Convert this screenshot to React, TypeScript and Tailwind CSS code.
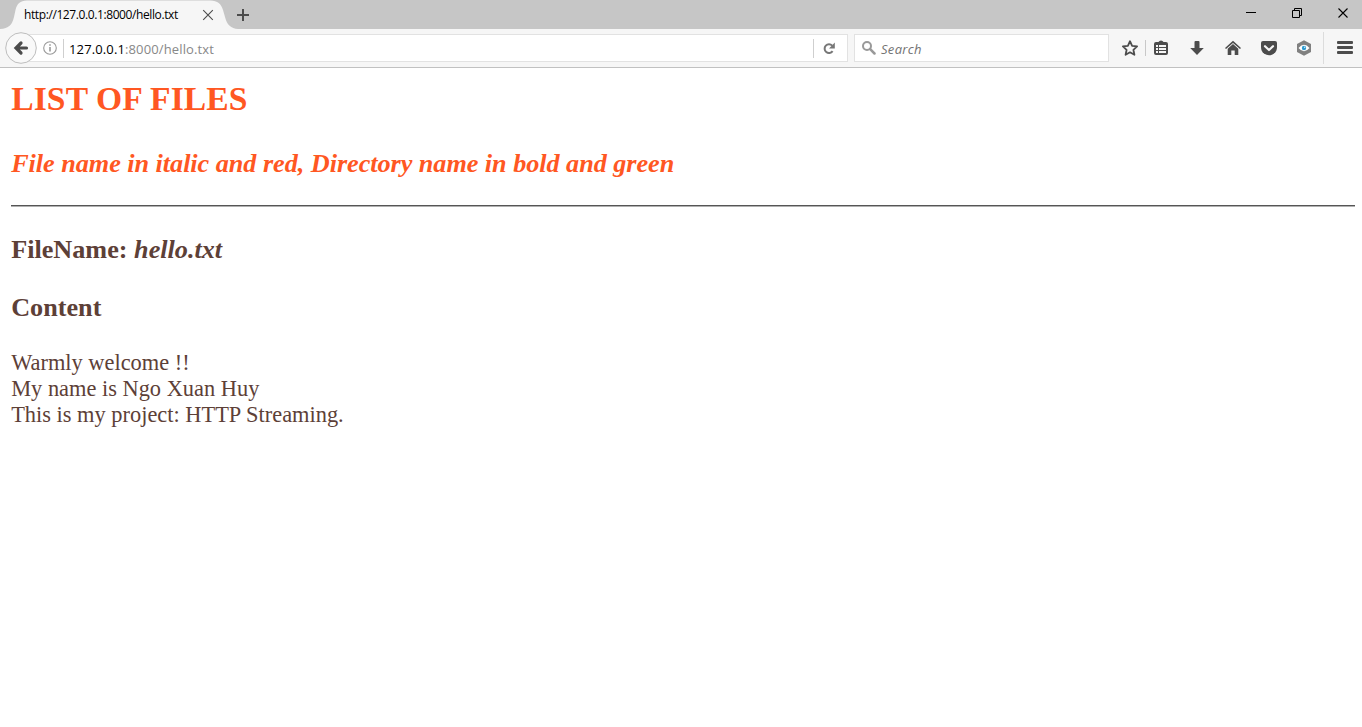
function TabStrip() {
  return (
    <div className="relative flex h-[29px] bg-[#c6c6c6]">
      <svg className="absolute left-0 top-0" width="240" height="29" viewBox="0 0 240 29">
        <path
          d="M0 29 C9 28.5 12 25 14 17 L15.500 10 C17 4 20 .5 27 .5 H210 C218 .5 221 4 223 10 L225 17 C227 25 231 28.500 238 29 Z"
          fill="#f6f6f6"
        />
      </svg>
      <div className="relative flex h-[29px] w-[226px] items-center pl-6">
        <span className="w-[177px] whitespace-nowrap pt-px text-[12px] leading-[16px] tracking-[-0.4px] text-black">
          http://127.0.0.1:8000/hello.txt
        </span>
        <svg className="ml-px" width="12" height="12" viewBox="0 0 12 12" stroke="#4c4c4c" strokeWidth="1.1">
          <path d="M1.200 1.200 10.800 10.800M10.800 1.200 1.200 10.800" />
        </svg>
      </div>
      <div className="relative flex h-[29px] flex-1 items-center pl-[10px]">
        <svg width="14" height="14" viewBox="0 0 14 14" fill="#4c4c4c">
          <path d="M6 1h2v5h5v2H8v5H6V8H1V6h5z" />
        </svg>
      </div>
      <div className="relative flex h-[26px] items-center">
        <svg width="116" height="26" viewBox="0 0 116 26" fill="none" stroke="#000">
          <path d="M0 12.500h10" />
          <path d="M46.500 10.500h7v7h-7z" />
          <path d="M48.500 10.500v-2h7v7h-2" />
          <path d="M92.500 8.500 101.500 17.500M101.500 8.500 92.500 17.500" strokeWidth="1.1" />
        </svg>
      </div>
    </div>
  );
}

function BackButton() {
  return (
    <svg className="relative ml-[5px] shrink-0" width="32" height="32" viewBox="0 0 32 32">
      <circle cx="16" cy="16" r="15.300" fill="#f9f9f9" stroke="#bdbdbd" />
      <path
        d="M16 11 11 16l5 5M11.500 16H21.500"
        fill="none"
        stroke="#4c4c4c"
        strokeWidth="3.200"
        strokeLinecap="round"
      />
    </svg>
  );
}

function ToolbarIcons() {
  return (
    <svg className="shrink-0" width="253" height="38" viewBox="1109 29 253 38" fill="#4c4c4c">
      <path
        d="m1130 41.200 2.100 4.600 5 .6-3.700 3.400 1 5-4.400-2.500-4.400 2.500 1-5-3.700-3.400 5-.6z"
        fill="none"
        stroke="#4c4c4c"
        strokeWidth="1.800"
        strokeLinejoin="round"
      />
      <path d="M1145 40h1v16h-1z" fill="#c8c8c8" />
      <path
        fillRule="evenodd"
        d="M1156 42h2.500l1-1q1.500-1 3 0l1 1h2.500q2 0 2 2v9q0 2-2 2h-10q-2 0-2-2v-9q0-2 2-2zM1156 45v2h2v-2zM1159 45v2h7v-2zM1156 48v2h2v-2zM1159 48v2h7v-2zM1156 51v2h2v-2zM1159 51v2h7v-2z"
      />
      <path d="M1195.500 41h3q1 0 1 1v6h4.300l-6.800 7-6.800-7h4.300v-6q0-1 1-1z" />
      <path d="m1233 40.800 8 7.200-1 1.100-7-6.200-7 6.200-1-1.100z" />
      <path d="m1233 44 5.300 4.700V55h-3.600v-4.500h-3.400V55h-3.600v-6.300z" />
      <path d="M1263 41h12q2 0 2 2v4q0 4-3 6.500-2.500 1.800-5 1.800t-5-1.800q-3-2.500-3-6.500v-4q0-2 2-2z" />
      <path
        d="m1265 46.200 4 3.800 4-3.800"
        fill="none"
        stroke="#f6f6f6"
        strokeWidth="2.200"
        strokeLinecap="round"
        strokeLinejoin="round"
      />
      <path d="m1304 40.200 7 3.800v8l-7 3.800-7-3.800v-8z" fill="#808080" />
      <path d="M1298.500 48q5.500-6.500 11 0-5.500 6.500-11 0z" fill="#fff" />
      <circle cx="1304" cy="48" r="2.200" fill="#2f9bd0" />
      <circle cx="1304.700" cy="47.300" r=".7" fill="#d8effa" />
      <path d="M1323 32h1v32h-1z" fill="#dcdcdc" />
      <rect x="1337" y="41" width="16" height="3" rx="1" />
      <rect x="1337" y="46" width="16" height="3" rx="1" />
      <rect x="1337" y="51" width="16" height="3" rx="1" />
    </svg>
  );
}

function Toolbar() {
  return (
    <div className="flex h-[39px] items-center border-b border-[#c1c1c1] bg-[#f6f6f6]">
      <BackButton />
      <div className="-ml-4 flex h-7 w-[827px] items-center border border-[#e2e2e2] bg-white pl-[21px]">
        <svg width="14" height="14" viewBox="0 0 14 14" fill="none" stroke="#999">
          <circle cx="7" cy="7" r="6.300" strokeWidth="1.100" />
          <path d="M7 6v4.500M7 3.300v1.500" strokeWidth="1.600" />
        </svg>
        <div className="ml-[6px] h-[19px] w-px bg-[#cfcfcf]" />
        <div className="ml-[5px] flex-1 whitespace-nowrap pt-[2px] text-[13px] leading-[18px] tracking-[0.13px] text-[#888]">
          <span className="text-black">127.0.0.1</span>:8000/hello.txt
        </div>
        <div className="h-[19px] w-px bg-[#cfcfcf]" />
        <svg className="ml-[9px] mr-[11px]" width="13" height="13" viewBox="0 0 13 13">
          <path d="M9.600 9.200A4.400 4.400 0 1 1 9.200 3.600" fill="none" stroke="#777" strokeWidth="2" />
          <path d="M11.800 .5v6H6z" fill="#777" />
        </svg>
      </div>
      <div className="ml-[6px] flex h-7 w-[255px] items-center border border-[#e2e2e2] bg-white pl-[7px]">
        <svg width="14" height="14" viewBox="0 0 14 14" fill="none" stroke="#999">
          <circle cx="5" cy="5" r="4" strokeWidth="2" />
          <path d="m8.200 8.200 4.300 4.300" strokeWidth="2.500" strokeLinecap="round" />
        </svg>
        <span className="ml-[5px] pt-[2px] text-[13px] italic leading-[18px] tracking-[0.3px] text-[#737373]">
          Search
        </span>
      </div>
      <ToolbarIcons />
    </div>
  );
}

export default function App() {
  return (
    <div className="flex h-[727px] w-[1362px] flex-col overflow-hidden bg-white">
      <header className="font-['Open_Sans','Noto_Sans',sans-serif]">
        <TabStrip />
        <Toolbar />
      </header>
      <main className="flex-1 pl-[11.2px] pr-[7.5px] pt-3 font-['Liberation_Serif',serif] text-[22.4px] leading-[26px] text-[#5d4037]">
        <h1 className="text-[33.6px] font-bold leading-[38px] tracking-[0.1px] text-[#ff5722]">LIST OF FILES</h1>
        <h2 className="mt-[31px] text-[26.2px] font-bold italic leading-[30px] tracking-[-0.03px] text-[#ff5722]">
          File name in italic and red, Directory name in bold and green
        </h2>
        <div className="mt-[26px] h-[2px] border-b border-t border-b-[#b0b0b0] border-t-[#555]" />
        <h2 className="mt-[28px] text-[26.2px] font-bold leading-[30px]">
          FileName: <i>hello.txt</i>
        </h2>
        <h2 className="mb-[27px] mt-[28px] text-[26.2px] font-bold leading-[30px]">Content</h2>
        <p>Warmly welcome !!</p>
        <p>My name is Ngo Xuan Huy</p>
        <p>This is my project: HTTP Streaming.</p>
      </main>
    </div>
  );
}
